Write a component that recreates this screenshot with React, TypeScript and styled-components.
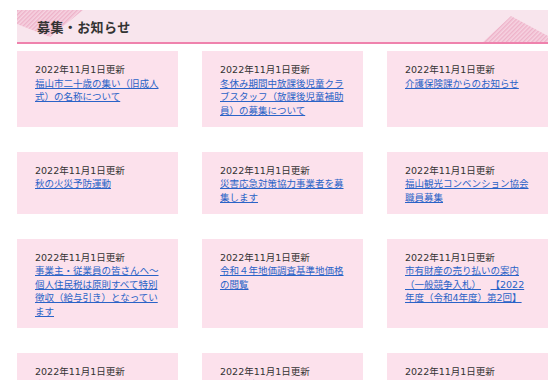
import React from 'react';
import styled, { createGlobalStyle } from 'styled-components';

type Notice = { date: string; title: string };

const notices: Notice[] = [
  { date: '2022年11月1日更新', title: '福山市二十歳の集い（旧成人式）の名称について' },
  { date: '2022年11月1日更新', title: '冬休み期間中放課後児童クラブスタッフ（放課後児童補助員）の募集について' },
  { date: '2022年11月1日更新', title: '介護保険課からのお知らせ' },
  { date: '2022年11月1日更新', title: '秋の火災予防運動' },
  { date: '2022年11月1日更新', title: '災害応急対策協力事業者を募集します' },
  { date: '2022年11月1日更新', title: '福山観光コンベンション協会職員募集' },
  { date: '2022年11月1日更新', title: '事業主・従業員の皆さんへ～個人住民税は原則すべて特別徴収（給与引き）となっています' },
  { date: '2022年11月1日更新', title: '令和４年地価調査基準地価格の閲覧' },
  { date: '2022年11月1日更新', title: '市有財産の売り払いの案内（一般競争入札）　【2022年度（令和4年度）第2回】' },
  { date: '2022年11月1日更新', title: '市民課からのお知らせ' },
  { date: '2022年11月1日更新', title: '国民健康保険について' },
  { date: '2022年11月1日更新', title: '職員採用試験のお知らせ' },
];

const GlobalStyle = createGlobalStyle`
  body {
    margin: 0;
    background: #ffffff;
    font-family: "DejaVu Sans", "Noto Sans CJK JP", sans-serif;
  }
`;

const Wrapper = styled.div`
  padding: 10px 6px 0 17px;
`;

const Heading = styled.div`
  position: relative;
  height: 32px;
  display: flex;
  align-items: center;
  padding-left: 20px;
  background: #f8e5ed;
  border-bottom: 2px solid #ef82ad;
  overflow: hidden;
`;

const HeadingText = styled.h2`
  position: relative;
  margin: 0;
  font-family: "Noto Sans CJK JP", sans-serif;
  font-size: 13px;
  font-weight: bold;
  color: #333333;
  letter-spacing: 0.4px;
`;

const Deco = styled.svg<{ $side: 'left' | 'right' }>`
  position: absolute;
  top: 0;
  ${(p) => (p.$side === 'left' ? 'left: 0;' : 'right: 0;')}
`;

const Grid = styled.div`
  display: grid;
  grid-template-columns: repeat(3, 1fr);
  column-gap: 24px;
  row-gap: 24.5px;
  margin-top: 7px;
`;

const Card = styled.div`
  background: #fce1ec;
  padding: 12px 18px 10px;
  font-size: 9.5px;
  line-height: 13.5px;
`;

const DateText = styled.p`
  margin: 0;
  color: #333333;
`;

const TitleLink = styled.a`
  color: #2a63c7;
  text-decoration: underline;
`;

// ideographic space, kept at full width
const WideSpace = styled.span`
  display: inline-block;
  width: 1em;
`;

function Hatch({ id }: { id: string }) {
  return (
    <defs>
      <pattern id={id} width="3" height="3" patternUnits="userSpaceOnUse" patternTransform="rotate(45)">
        <rect width="3" height="3" fill="#f6d3e1" />
        <rect width="1.4" height="3" fill="#eeb2c9" />
      </pattern>
    </defs>
  );
}

function renderTitle(title: string) {
  const parts = title.split('　');
  return parts.map((p, i) => (
    <React.Fragment key={i}>
      {i > 0 && <WideSpace />}
      {p}
    </React.Fragment>
  ));
}

export default function App() {
  return (
    <Wrapper>
      <GlobalStyle />
      <Heading>
        <Deco $side="left" width="70" height="32" viewBox="0 0 70 32">
          <Hatch id="hl" />
          <polygon points="0,0 66,0 33,27 0,14" fill="url(#hl)" />
        </Deco>
        <Deco $side="right" width="70" height="33" viewBox="0 0 70 33">
          <Hatch id="hr" />
          <polygon points="4,33 33,6 70,26 70,33" fill="url(#hr)" />
        </Deco>
        <HeadingText>募集・お知らせ</HeadingText>
      </Heading>
      <Grid>
        {notices.map((n, i) => (
          <Card key={i}>
            <DateText>{n.date}</DateText>
            <TitleLink href="#">{renderTitle(n.title)}</TitleLink>
          </Card>
        ))}
      </Grid>
    </Wrapper>
  );
}
